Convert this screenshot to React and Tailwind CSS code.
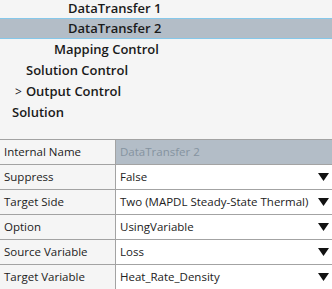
export default function App() {
  const rows = [
    ["Internal Name", "DataTransfer 2", "ro"],
    ["Suppress", "False", "dd"],
    ["Target Side", "Two (MAPDL Steady-State Thermal)", "dd"],
    ["Option", "UsingVariable", "dd"],
    ["Source Variable", "Loss", "dd"],
    ["Target Variable", "Heat_Rate_Density", "dd"],
  ];
  const Arrow = () => (
    <svg width="11" height="8" viewBox="0 0 11 8" className="shrink-0">
      <polygon points="0,0 11,0 5.5,8" fill="#111" />
    </svg>
  );
  return (
    <div
      className="w-[332px] h-[289px] overflow-hidden bg-[#f5f5f5] text-[#1a1a1a]"
      style={{ fontFamily: '"Open Sans", sans-serif' }}
    >
      <div className="flex flex-col text-[13px] font-semibold leading-[21px] h-[139px]">
        <div className="h-[18px] leading-[16px] pl-[68px]">DataTransfer 1</div>
        <div className="h-[21px] leading-[19px] pl-[68px] bg-[#b3bdc7] border-y border-[#86c8ea]">DataTransfer 2</div>
        <div className="h-[21px] pl-[54px]">Mapping Control</div>
        <div className="h-[21px] pl-[26px]">Solution Control</div>
        <div className="h-[21px] pl-[15px] flex items-center gap-[4px]">
          <span className="font-normal text-[12px]">&gt;</span>
          <span>Output Control</span>
        </div>
        <div className="h-[21px] pl-[12px]">Solution</div>
      </div>
      <div className="border-t border-[#a3a3a3] text-[11.5px] text-[#222]">
        {rows.map(([k, v, t]) => (
          <div key={k} className="flex h-[25px] border-b border-[#a3a3a3]">
            <div className="w-[116px] shrink-0 bg-[#f5f5f5] border-r border-[#a3a3a3] pl-[4px] flex items-center">
              {k}
            </div>
            {t === "ro" ? (
              <div className="flex-1 bg-[#b3bdc7] text-[#8593a0] pl-[4px] flex items-center">{v}</div>
            ) : (
              <div className="flex-1 bg-white pl-[4px] pr-[3px] flex items-center justify-between">
                <span>{v}</span>
                <Arrow />
              </div>
            )}
          </div>
        ))}
      </div>
    </div>
  );
}
